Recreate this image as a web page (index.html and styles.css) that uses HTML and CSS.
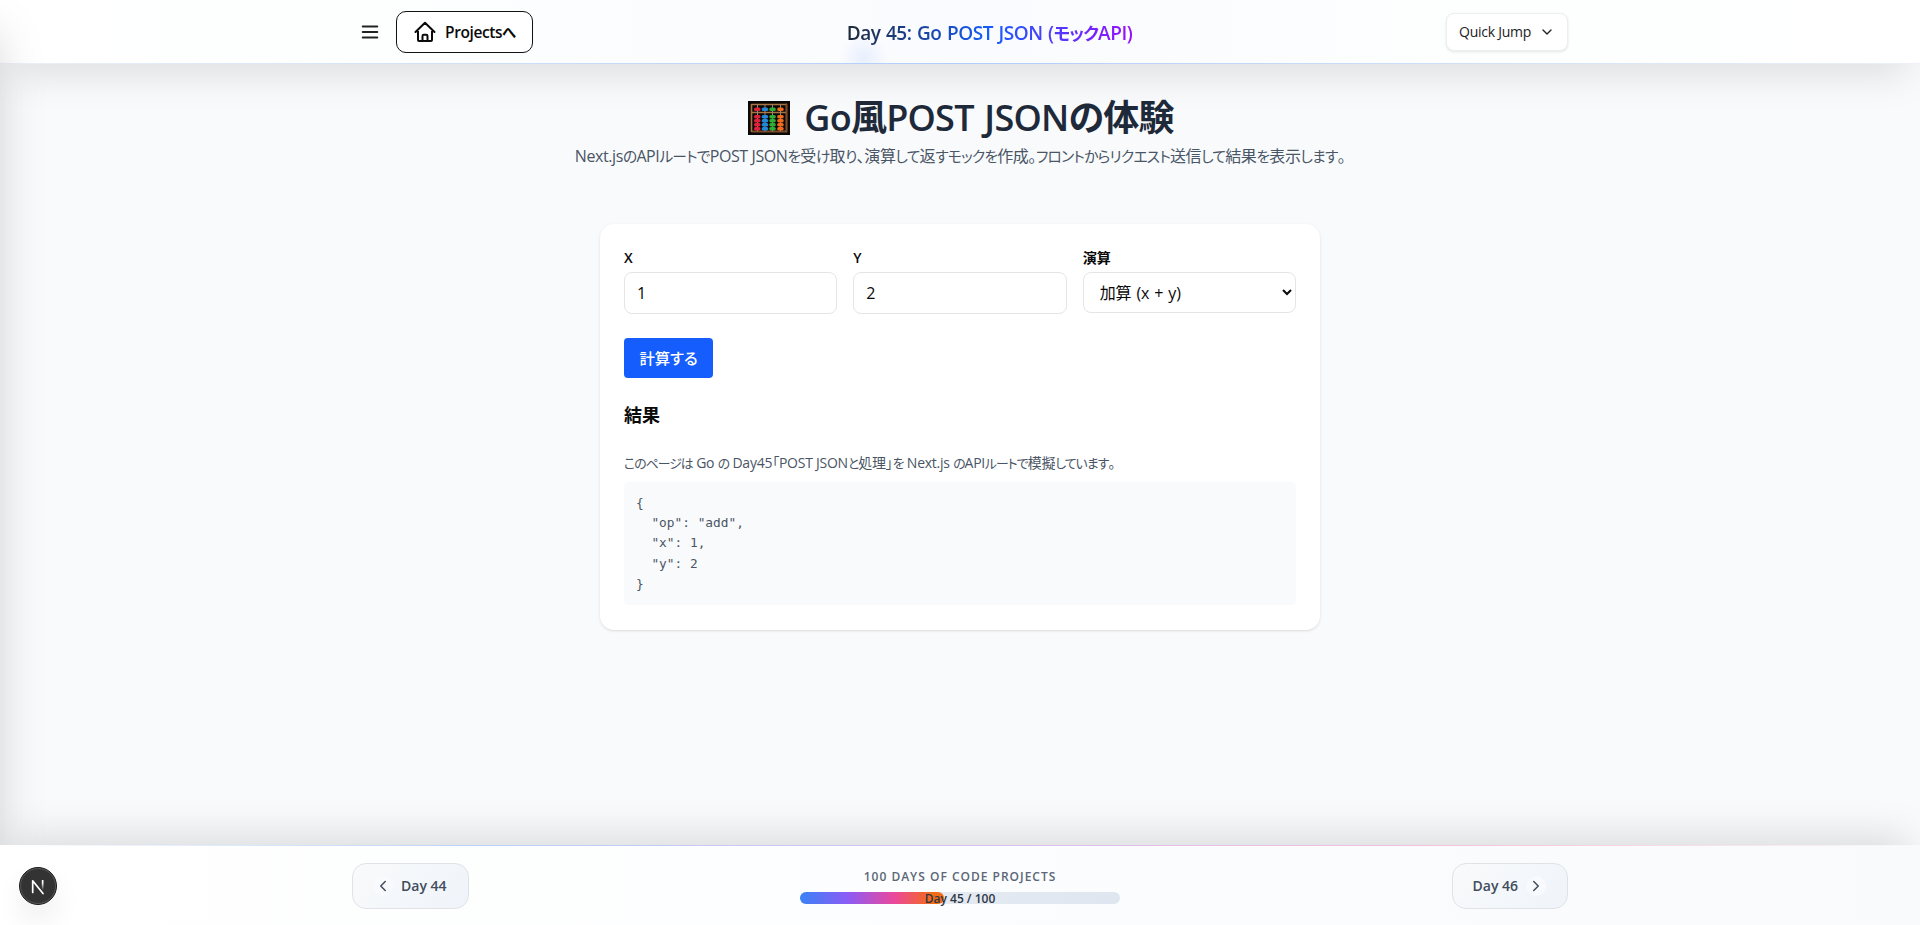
FILE: index.html
```html
<!DOCTYPE html>
<html lang="ja">
<head>
<meta charset="utf-8">
<title>Day 45: Go POST JSON</title>
<link rel="stylesheet" href="styles.css">
</head>
<body>
<div class="page">
  <header class="header">
    <div class="container header-row">
      <div class="header-left">
        <button class="menu" aria-label="menu"><svg width="22" height="22" viewBox="0 0 24 24"><path d="M4 6h16M4 12h16M4 18h16"/></svg></button>
        <a class="home"><svg width="24" height="24" viewBox="0 0 24 24"><path d="M2.5 12 12 2.7 21.500 12M5 9.800V20a1 1 0 0 0 1 1h12a1 1 0 0 0 1-1V9.800M9.500 21v-5a1.200 1.200 0 0 1 1.200-1.200h2.600a1.200 1.200 0 0 1 1.200 1.200v5"/></svg><span>Projects<span class="kana">へ</span></span></a>
      </div>
      <div class="header-title">Day 45: Go POST JSON (<span class="kana">モック</span>API)</div>
      <button class="jump"><span>Quick Jump</span><svg width="16" height="16" viewBox="0 0 24 24"><path d="m6 9 6 6 6-6"/></svg></button>
    </div>
    <div class="header-line"></div>
  </header>
  <aside class="drawer"></aside>
  <main class="main">
    <h1 class="title">
      <svg class="abacus" width="42" height="34" viewBox="0 0 42 34">
        <rect width="42" height="34" fill="#0b0908"/>
        <path d="M3.500 3.500h35v27h-35zM3.500 11.500h35" fill="none" stroke="#a87442" stroke-width="1.600"/>
        <path d="M5 30.500h32M38.500 3v28" stroke="#7c4a28" stroke-width="1.500"/>
        <path d="M9.500 4v26M17 4v26M24.500 4v26M32.500 4v26" stroke="#998778"/>
        <g fill="#df2039"><rect x="6" y="6.500" width="6.500" height="3.600" rx="1.700"/><rect x="6" y="14" width="6.500" height="3.400" rx="1.600"/><rect x="6" y="18" width="6.500" height="3.400" rx="1.600"/><rect x="6" y="22" width="6.500" height="3.400" rx="1.600"/><rect x="6" y="26" width="6.500" height="3.400" rx="1.600"/></g>
        <g fill="#2488da"><rect x="13.700" y="6.500" width="6.500" height="3.600" rx="1.700"/><rect x="13.700" y="14" width="6.500" height="3.400" rx="1.600"/><rect x="13.700" y="18" width="6.500" height="3.400" rx="1.600"/><rect x="13.700" y="22" width="6.500" height="3.400" rx="1.600"/><rect x="13.700" y="26" width="6.500" height="3.400" rx="1.600"/></g>
        <g fill="#2fae35"><rect x="21.300" y="6.500" width="6.500" height="3.600" rx="1.700"/><rect x="21.300" y="14" width="6.500" height="3.400" rx="1.600"/><rect x="21.300" y="18" width="6.500" height="3.400" rx="1.600"/><rect x="21.300" y="22" width="6.500" height="3.400" rx="1.600"/><rect x="21.300" y="26" width="6.500" height="3.400" rx="1.600"/></g>
        <g fill="#f26b1d"><rect x="29.200" y="6.500" width="6.500" height="3.600" rx="1.700"/><rect x="29.200" y="14" width="6.500" height="3.400" rx="1.600"/><rect x="29.200" y="18" width="6.500" height="3.400" rx="1.600"/><rect x="29.200" y="22" width="6.500" height="3.400" rx="1.600"/><rect x="29.200" y="26" width="6.500" height="3.400" rx="1.600"/></g>
      </svg>
      <span>Go風POST JSONの体験</span>
    </h1>
    <p class="lead">Next.js<span class="kana">の</span>API<span class="kana">ルートで</span>POST JSON<span class="kana">を</span>受<span class="kana">け</span>取<span class="kana">り</span>、演算<span class="kana">して</span>返<span class="kana">すモックを</span>作成。<span class="kana">フロントからリクエスト</span>送信<span class="kana">して</span>結果<span class="kana">を</span>表示<span class="kana">します</span>。</p>
    <section class="card">
      <div class="fields">
        <label class="field"><span>X</span><input class="input" value="1"></label>
        <label class="field"><span>Y</span><input class="input" value="2"></label>
        <label class="field"><span>演算</span><select class="input select"><option>加算 (x + y)</option></select></label>
      </div>
      <button class="submit"><span>計算する</span></button>
      <h2 class="result">結果</h2>
      <p class="note"><span class="kana">このページは</span> Go <span class="kana">の</span> Day45「POST JSON<span class="kana">と</span>処理」<span class="kana">を</span> Next.js <span class="kana">の</span>API<span class="kana">ルートで</span>模擬<span class="kana">しています</span>。</p>
      <pre class="code">{
  "op": "add",
  "x": 1,
  "y": 2
}</pre>
    </section>
  </main>
  <footer class="footer">
    <div class="footer-line"></div>
    <div class="container footer-row">
      <a class="nav prev"><i class="nav-icon"><svg width="18" height="18" viewBox="0 0 24 24"><path d="m15 18-6-6 6-6"/></svg></i><span>Day 44</span></a>
      <div class="progress">
        <div class="progress-label">100 DAYS OF CODE PROJECTS</div>
        <div class="bar"><div class="bar-fill" style="width:45%"></div><div class="bar-text">Day 45 / 100</div></div>
      </div>
      <a class="nav next"><span>Day 46</span><i class="nav-icon"><svg width="18" height="18" viewBox="0 0 24 24"><path d="m9 18 6-6-6-6"/></svg></i></a>
    </div>
  </footer>
  <div class="dev-badge">
    <svg width="38" height="38" viewBox="0 0 38 38"><defs><linearGradient id="ng" x1="0" y1="0" x2="0" y2="1"><stop offset=".3" stop-color="#fff"/><stop offset="1" stop-color="#fff" stop-opacity="0"/></linearGradient></defs><circle cx="19" cy="19" r="18.500" fill="#333" stroke="#1b1b1b"/><circle cx="19" cy="19" r="17.500" fill="none" stroke="#555"/><path d="M13.700 25.500V13.800L24 26.500" fill="none" stroke="#fff" stroke-width="1.700"/><rect x="22.800" y="13" width="1.700" height="10" fill="url(#ng)"/></svg>
  </div>
</div>
</body>
</html>
```

FILE: styles.css
```css
* { box-sizing: border-box; }
body { margin: 0; font-family: "Open Sans", "Noto Sans CJK JP", sans-serif; font-size: 16px; line-height: 24px; color: #0a0a0a; background: #f9fafb; font-feature-settings: "palt"; }
h1, h2, p, pre { margin: 0; }
button, input, select { font: inherit; color: inherit; }
svg { display: block; flex: none; }
svg path { stroke-linecap: round; stroke-linejoin: round; }
.kana { font-size: .92em; letter-spacing: -.05em; line-height: 1; }
.header svg, .nav svg { fill: none; stroke: currentColor; stroke-width: 2; }
.page { height: 925px; display: flex; flex-direction: column; position: relative; overflow: hidden; background: #f8fafc; }
.container { width: 1216px; margin: 0 auto; }

.header { height: 64px; flex: none; position: relative; z-index: 2; background: radial-gradient(circle 24px at 864px 58px, rgba(219,230,254,.6), transparent), linear-gradient(90deg, #fff 0%, #fdfefe 20%, #fafbfe 50%, #fdfefe 75%, #fff 100%); box-shadow: 0 20px 40px -12px rgba(0,0,0,.13); }
.header-row { height: 64px; display: flex; justify-content: space-between; align-items: center; }
.header-left { display: flex; align-items: center; gap: 15px; padding-left: 7px; }
.menu { border: 0; padding: 0; background: none; color: #222; }
.home { height: 42px; width: 137px; border: 1px solid #111; border-radius: 10px; background: #fff; display: flex; align-items: center; gap: 8px; padding-left: 16px; font-size: 15.500px; font-weight: 600; letter-spacing: -.4px; white-space: nowrap; }
.header-title { padding-top: 1px; font-size: 19px; font-weight: 600; line-height: 28px; letter-spacing: -.45px; word-spacing: 1px; white-space: nowrap; background: linear-gradient(90deg, #1e2939, #155dfc 50%, #9810fa); background-clip: text; -webkit-background-clip: text; color: transparent; }
.jump { width: 122px; height: 38px; border: 1px solid #eceef2; border-radius: 8px; background: #fff; box-shadow: 0 1px 3px rgba(0,0,0,.1); display: flex; align-items: center; justify-content: space-between; padding: 0 12px; font-size: 14px; color: #222; letter-spacing: -.25px; white-space: nowrap; }
.header-line { position: absolute; left: 0; right: 0; bottom: 0; height: 1px; background: linear-gradient(90deg, #eef1f7, #b0cdfa 50%, #eef1f7); }

.drawer { position: absolute; z-index: 3; left: -320px; top: 0; width: 320px; height: 925px; box-shadow: 0 25px 50px -12px rgba(0,0,0,.25); }

.main { flex: 1; padding-top: 31px; display: flex; flex-direction: column; align-items: center; }
.title { height: 46px; display: flex; align-items: center; gap: 14px; color: #1e2939; font-size: 36px; line-height: 46px; font-weight: 600; letter-spacing: -.75px; word-spacing: 2px; white-space: nowrap; }
.abacus { margin-left: 2px; }
.lead { margin-top: 3px; height: 24px; color: #4a5565; font-size: 16px; white-space: nowrap; letter-spacing: -.4px; }
.card { margin-top: 56px; width: 720px; height: 406px; padding: 24px; background: #fff; border-radius: 14px; box-shadow: 0 1px 3px rgba(0,0,0,.1), 0 1px 2px -1px rgba(0,0,0,.1); }
.fields { display: grid; grid-template-columns: repeat(3, 1fr); gap: 16px; }
.field > span { display: block; height: 20px; margin-bottom: 4px; line-height: 19px; font-size: 14px; font-weight: 600; }
.input { display: block; width: 100%; height: 42px; border: 1px solid #e5e5e5; border-radius: 8px; padding: 0 12px; background: #fff; outline: 0; }
.select { height: 41px; padding: 0 0 0 12px; letter-spacing: -.2px; word-spacing: 1.200px; }
.submit { margin-top: 24px; display: flex; align-items: center; justify-content: center; width: 89px; height: 40px; padding: 0 0 1px; border: 0; border-radius: 4px; background: #155dfc; color: #fff; font-weight: 500; font-size: 15.300px; }
.result { margin-top: 23px; font-size: 18px; line-height: 28px; font-weight: 600; }
.note { margin-top: 24px; height: 20px; font-size: 14px; line-height: 20px; color: #4a5565; letter-spacing: -.25px; white-space: nowrap; }
.note .kana { letter-spacing: -.075em; }
.code { margin-top: 9px; height: 123px; padding: 11px 12px; border-radius: 4px; background: #f9fafb; color: #4a5565; font: 12.800px/20.200px "DejaVu Sans Mono", monospace; }

.footer { height: 80px; flex: none; position: relative; z-index: 4; background: linear-gradient(90deg, #fff, #fcfdfe 50%, #f8fafc); box-shadow: 0 -20px 40px -12px rgba(0,0,0,.13); }
.footer-line { height: 1px; background: linear-gradient(90deg, #fff, #b9d2fb 25%, #d9c0f5 50%, #f7bfdc 75%, #f8fafc); }
.footer-row { height: 79px; padding-top: 1px; display: flex; justify-content: space-between; align-items: center; }
.nav { height: 46px; border: 1px solid #dfe3e8; border-radius: 14px; background: linear-gradient(135deg, #f9fafb, #eff4fa); display: flex; align-items: center; gap: 8px; font-size: 14px; font-weight: 600; color: #414c5c; white-space: nowrap; }
.prev { width: 116.500px; padding-left: 20px; }
.next { width: 116.500px; padding-left: 20px; }
.nav-icon { width: 20px; height: 20px; border-radius: 50%; background: #f8fafd; display: flex; align-items: center; justify-content: center; }
.progress { width: 320px; margin-bottom: 4px; display: flex; flex-direction: column; align-items: center; }
.progress-label { margin-top: 5px; height: 16px; line-height: 16px; font-size: 12px; font-weight: 600; letter-spacing: 1px; color: #5b6676; white-space: nowrap; }
.bar { margin-top: 7px; width: 320px; height: 12px; border-radius: 6px; position: relative; background: linear-gradient(90deg, #e9edf4, #dfe6ef); }
.bar-fill { height: 12px; border-radius: 6px; background: linear-gradient(90deg, #3b82f6, #8b5cf6 33%, #ec4899 66%, #f36b16 92%); }
.bar-text { position: absolute; inset: -2px 0; line-height: 17px; font-size: 12px; font-weight: 600; text-align: center; color: #2d3746; }
.dev-badge { position: absolute; z-index: 5; left: 19px; bottom: 20px; width: 38px; height: 38px; border-radius: 50%; box-shadow: 0 16px 32px -8px rgba(0,0,0,.2); }
```
